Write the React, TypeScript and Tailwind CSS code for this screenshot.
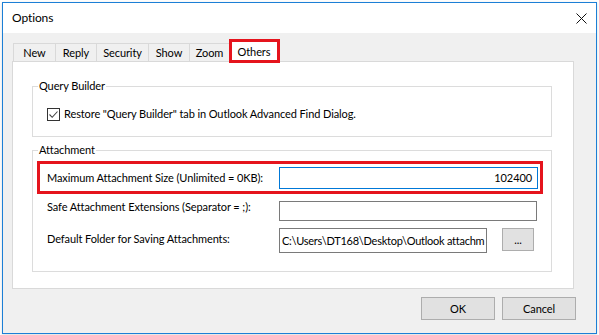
const tabs = [
  { label: "New", w: "w-[42px]" },
  { label: "Reply", w: "w-[41px]" },
  { label: "Security", w: "w-[52px]" },
  { label: "Show", w: "w-[41px]" },
  { label: "Zoom", w: "w-[40px]" },
];

const GroupLabel = ({ text }: { text: string }) => (
  <span className="absolute left-[5px] top-[-9px] bg-white px-[1px] leading-[16px]">{text}</span>
);

const App = () => {
  return (
    <div className="w-[599px] h-[335px] bg-white pl-[2px] pt-[2px] text-[11px] tracking-[-0.1px] text-black font-['Lato',sans-serif]">
      <div className="w-[595px] h-[332px] border border-[#1c7fd6] flex flex-col shadow-[0_1px_3px_rgba(0,0,0,0.15)]">
        {/* title bar */}
        <div className="h-[30px] bg-white flex items-center justify-between pl-[9px] pr-[9px]">
          <span className="leading-[16px] text-[12px]">Options</span>
          <svg width="11" height="11" viewBox="0 0 11 11">
            <path d="M0.5 0.5 L10.5 10.5 M10.5 0.5 L0.5 10.5" stroke="#111" strokeWidth="1" />
          </svg>
        </div>

        {/* body */}
        <div className="flex-1 bg-[#f0f0f0] pl-[9px] pt-[8px]">
          {/* tabs */}
          <div className="flex items-end h-[20px] ml-[1px]">
            {tabs.map((t) => (
              <div
                key={t.label}
                className={`${t.w} h-[18px] border-l border-t border-[#d9d9d9] bg-[#f0f0f0] flex items-center justify-center leading-[16px]`}
              >
                {t.label}
              </div>
            ))}
            <div className="relative z-10 w-[50px] h-[21px] -mb-[1px] border-l border-t border-r border-[#d9d9d9] bg-white flex items-start justify-center pt-[2px] leading-[16px]">
              Others
              <div className="absolute left-[-1px] top-[-3px] w-[51px] h-[24px] border-[3px] border-[#e5141d]" />
            </div>
          </div>

          {/* panel */}
          <div className="w-[562px] h-[228px] border border-[#d9d9d9] bg-white pt-[24px] pl-[19px]">
            <div className="relative w-[520px] h-[51px] border border-[#dcdcdc]">
              <GroupLabel text="Query Builder" />
              <div className="flex items-center pt-[19px] pl-[14px]">
                <div className="w-[13px] h-[13px] border border-[#333] flex items-center justify-center">
                  <svg width="11" height="11" viewBox="0 0 11 11">
                    <path d="M1.5 5.5 L4.2 8.3 L9.5 2.5" fill="none" stroke="#444" strokeWidth="1.1" />
                  </svg>
                </div>
                <span className="ml-[4px] leading-[16px]">Restore "Query Builder" tab in Outlook Advanced Find Dialog.</span>
              </div>
            </div>

            <div className="relative mt-[13px] w-[520px] h-[122px] border border-[#dcdcdc]">
              <GroupLabel text="Attachment" />
              <div className="ml-[4px] mt-[10px] w-[506px] h-[33px] border-[3px] border-[#e5141d] flex items-center">
                <span className="pl-[7px] leading-[16px] whitespace-nowrap">Maximum Attachment Size (Unlimited = 0KB):</span>
                <div className="ml-auto mr-[2px] w-[259px] h-[22px] border border-[#0078d7] flex items-center justify-end pr-[5px] leading-[16px]">
                  102400
                </div>
              </div>

              <div className="flex items-start mt-[7px]">
                <span className="ml-[14px] w-[232px] -mt-[2px] leading-[16px] whitespace-nowrap">Safe Attachment Extensions (Separator = ;):</span>
                <div className="w-[258px] h-[20px] border border-[#7a7a7a]" />
              </div>

              <div className="flex items-start mt-[7px]">
                <span className="ml-[14px] w-[232px] mt-[3px] leading-[16px] whitespace-nowrap">Default Folder for Saving Attachments:</span>
                <div className="w-[208px] h-[25px] border border-[#7a7a7a] flex items-center pl-[2px] overflow-hidden whitespace-nowrap leading-[16px] tracking-[-0.25px]">
                  C:\Users\DT168\Desktop\Outlook attachm
                </div>
                <div className="ml-[15px] w-[32px] h-[23px] border border-[#adadad] bg-[#e1e1e1] flex items-center justify-center leading-[16px]">
                  ...
                </div>
              </div>
            </div>
          </div>

          {/* buttons */}
          <div className="flex justify-end gap-[7px] pr-[20px] mt-[8px]">
            <div className="w-[74px] h-[23px] border border-[#adadad] bg-[#e1e1e1] flex items-center justify-center leading-[16px]">
              OK
            </div>
            <div className="w-[74px] h-[23px] border border-[#adadad] bg-[#e1e1e1] flex items-center justify-center leading-[16px]">
              Cancel
            </div>
          </div>
        </div>
      </div>
    </div>
  );
};

export default App;
